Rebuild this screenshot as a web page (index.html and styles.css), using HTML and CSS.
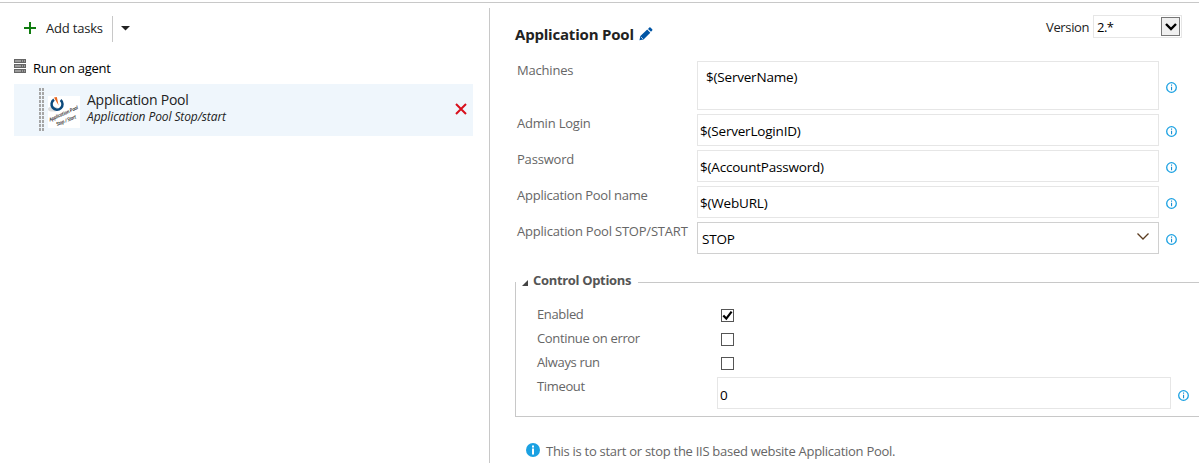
FILE: index.html
```html
<!DOCTYPE html>
<html lang="en">
<head>
<meta charset="utf-8">
<title>Application Pool</title>
<link rel="stylesheet" href="styles.css">
</head>
<body>
<svg width="0" height="0" class="defs">
  <symbol id="info" viewBox="0 0 11 11">
    <circle cx="5.5" cy="5.5" r="4.8" fill="none" stroke="#1ba1e2" stroke-width="1.3"/>
    <path d="M5 2.6h1.1v1.1H5zM5 4.7h1.1v3.6H5z" fill="#1b8fd0"/>
  </symbol>
</svg>
<main class="page">
  <section class="tasks">
    <div class="toolbar">
      <svg class="plus" width="12" height="12" viewBox="0 0 12 12"><path d="M6 0v12M0 6h12" stroke="#107c10" stroke-width="2"/></svg>
      <span class="add">Add tasks</span>
      <span class="sep"></span>
      <svg width="9" height="5" viewBox="0 0 9 5"><path d="M0 0h9L4.5 4.5z" fill="#222"/></svg>
    </div>
    <div class="agent">
      <svg width="12" height="14" viewBox="0 0 12 14"><path d="M0 0h12v4H0zM0 5h12v4H0zM0 10h12v4H0z" fill="#666"/><path d="M1 2h6M8 2h1M10 2h1M1 7h6M8 7h1M10 7h1M1 12h6M8 12h1M10 12h1" stroke="#ddd" stroke-width=".9"/></svg>
      <span class="agent-name">Run on agent</span>
    </div>
    <div class="task">
      <span class="grip"></span>
      <svg class="logo" width="32" height="32" viewBox="0 0 32 32">
        <path d="M0 0h32v32H0z" fill="#fff"/>
        <ellipse cx="5" cy="13" rx="5" ry="2.6" fill="#ddd"/>
        <path d="M6 3.6A5.5 5.5 0 1 0 12.6 4" fill="none" stroke="#0d4a7c" stroke-width="2.5"/>
        <path d="M6 1.500l2.800-.5 1.800 8.500z" fill="#e8641b"/>
        <g fill="#111" font-family="Open Sans, sans-serif" font-style="italic" font-weight="600">
          <text x="2" y="25.500" font-size="5" textLength="31" lengthAdjust="spacingAndGlyphs" transform="rotate(-24 2 25.500)">Application Pool</text>
          <text x="9" y="30" font-size="5" textLength="21" lengthAdjust="spacingAndGlyphs" transform="rotate(-22 9 30)">Stop / Start</text>
        </g>
      </svg>
      <div class="task-text">
        <div class="task-title"><span>Application Pool</span></div>
        <div class="task-sub"><span>Application Pool Stop/start</span></div>
      </div>
      <svg class="remove" width="12" height="12" viewBox="0 0 12 12"><path d="M1 1l10 10M11 1L1 11" stroke="#d8101c" stroke-width="2"/></svg>
    </div>
  </section>
  <section class="details">
    <header class="head">
      <h1>Application Pool</h1>
      <svg class="pencil" width="14" height="14" viewBox="0 0 14 14"><path d="M.4 13.300l1-4.200 6.800-6.500 3.100 3.100-6.800 6.700zM9 1.900l1.300-1.300q.6-.5 1.200 0l1.700 1.700q.6.600 0 1.200L12 4.800z" fill="#0055a5"/><path d="M2 10l2 2" stroke="#fff" stroke-width=".7"/></svg>
      <span class="version-label">Version</span>
      <div class="version"><span>2.*</span>
        <span class="drop"><svg width="12" height="8" viewBox="0 0 12 8"><path d="M1 1l5 5 5-5" fill="none" stroke="#000" stroke-width="2.400"/></svg></span>
      </div>
    </header>
    <div class="form">
      <span class="label">Machines</span><div class="field area"><span>$(ServerName)</span></div><svg class="info"><use href="#info"/></svg>
      <span class="label">Admin Login</span><div class="field"><span>$(ServerLoginID)</span></div><svg class="info"><use href="#info"/></svg>
      <span class="label">Password</span><div class="field"><span>$(AccountPassword)</span></div><svg class="info"><use href="#info"/></svg>
      <span class="label label-name">Application Pool name</span><div class="field"><span>$(WebURL)</span></div><svg class="info"><use href="#info"/></svg>
      <span class="label">Application Pool STOP/START</span><div class="field select"><span>STOP</span><svg width="12" height="7" viewBox="0 0 12 7"><path d="M.5.500L6 6 11.500.500" fill="none" stroke="#5b3c20" stroke-width="1.300"/></svg></div><svg class="info"><use href="#info"/></svg>
    </div>
    <fieldset class="options">
      <legend><svg width="6" height="6" viewBox="0 0 6 6"><path d="M6 0v6H0z" fill="#444"/></svg><span>Control Options</span></legend>
      <div class="option"><span>Enabled</span><span class="check"><svg width="11" height="11" viewBox="0 0 11 11"><path d="M1.300 5.500L4.300 8.600 9.600 1.600" fill="none" stroke="#000" stroke-width="2.200"/></svg></span></div>
      <div class="option"><span>Continue on error</span><span class="check"></span></div>
      <div class="option"><span>Always run</span><span class="check"></span></div>
      <div class="option timeout"><span>Timeout</span><div class="field"><span>0</span></div><svg class="info"><use href="#info"/></svg></div>
    </fieldset>
    <div class="note">
      <svg width="14" height="14" viewBox="0 0 14 14"><circle cx="7" cy="7" r="7" fill="#1ba1e2"/><path d="M6 2.500h2v2H6zM6 5.500h2v6H6z" fill="#fff"/></svg>
      <span class="note-text">This is to start or stop the IIS based website Application Pool.</span>
    </div>
  </section>
</main>
</body>
</html>
```
FILE: styles.css
```css
* { box-sizing: border-box; }
body {
  margin: 0;
  background: #fff;
  color: #222;
  font: 13px/18px "Open Sans", "Noto Sans", sans-serif;
  letter-spacing: -0.2px;
  overflow: hidden;
}
svg { display: block; flex: none; }
.defs { display: none; }
span { white-space: nowrap; }
.page {
  width: 1199px;
  height: 461px;
  margin-top: 2px;
  border-top: 1px solid #c8c8c8;
  display: flex;
}
.tasks { width: 489px; padding: 13px 16px 0 14px; }
.toolbar { display: flex; align-items: center; height: 26px; padding-left: 10px; }
.add { margin: -3px 0 0 10px; width: 66px; }
.sep { width: 1px; height: 26px; background: #c8c8c8; margin-right: 8px; }
.toolbar svg:last-child { margin-top: -2px; }
.plus { margin-top: -2px; }
.agent { display: flex; height: 42px; padding-top: 17px; gap: 7px; }
.agent-name { color: #000; letter-spacing: -0.25px; }
.task {
  height: 52px;
  background: #eff6fc;
  display: flex;
  align-items: flex-start;
  padding: 4px 6px 0 25px;
}
.grip {
  width: 5px;
  height: 44px;
  background:
    repeating-linear-gradient(to bottom, transparent 0 3px, #eff6fc 3px 4px),
    repeating-linear-gradient(to right, #a6a6a6 0 2px, transparent 2px 3px);
}
.logo { margin: 8px 0 0 4px; overflow: visible; }
.task-text { padding: 4px 0 0 7px; flex: 1; }
.task-title { font-size: 14px; line-height: 16px; letter-spacing: -0.25px; }
.task-sub { font-size: 12px; line-height: 17px; font-style: italic; letter-spacing: -0.1px; }
.remove { margin-top: 15px; }
.details { flex: 1; margin-top: 5px; border-left: 1px solid #c8c8c8; padding-left: 25px; min-width: 0; }
.head { display: flex; height: 53px; padding-top: 7px; }
h1 { margin: 9px 0 0; font-size: 15px; line-height: 20px; width: 124px; white-space: nowrap; }
.pencil { margin-top: 12px; }
.version-label { margin: 3px 4px 0 auto; width: 43px; letter-spacing: -0.35px; }
.version {
  width: 89px;
  height: 23px;
  margin-right: 17px;
  padding: 1px 1px 1px 3px;
  border: 1px solid #e6e6e6;
  display: flex;
  justify-content: space-between;
  color: #000;
}
.version > span:first-child { margin-top: 1px; letter-spacing: -0.5px; }
.drop {
  width: 19px;
  height: 19px;
  border: 1px solid #777;
  background: #f0f0f0;
  display: flex;
  align-items: center;
  justify-content: center;
}
.form {
  display: grid;
  grid-template-columns: 180px 462px 11px;
  grid-template-rows: 49px repeat(4, 32px);
  row-gap: 4px;
  padding-left: 2px;
}
.label, .option, .note { color: #666; }
.label-name { letter-spacing: -0.25px; }
.field {
  height: 32px;
  border: 1px solid #e6e6e6;
  padding: 7px 2px 0;
  color: #000;
  font-size: 13.5px;
}
.area { height: 49px; padding: 6px 8px; }
.select { border-color: #d0d0d0; display: flex; justify-content: space-between; padding: 7px 9px 0 4px; }
.select svg { margin-top: 3px; }
.info { width: 11px; height: 11px; align-self: center; margin: 3px 0 0 7px; }
.options {
  margin: 18px 0 0;
  height: 145px;
  padding: 0 0 0 21px;
  border: 1px solid #c8c8c8;
  border-right: 0;
  min-width: 0;
}
legend {
  display: flex;
  align-items: center;
  gap: 5px;
  width: 122px;
  height: 20px;
  margin-left: -21px;
  padding: 0 0 0 6px;
  font-weight: 700;
  letter-spacing: -0.33px;
  color: #555;
}
legend svg { margin-top: 2px; }
legend span { margin-top: -4px; }
.option { display: flex; flex: none; height: 24px; letter-spacing: -0.35px; }
.option:nth-of-type(1) { margin-top: 13px; }
.option > span:first-child { width: 184px; }
.check { width: 13px; height: 13px; border: 1px solid #555; margin-top: 4px; }
.timeout { height: 32px; }
.timeout > span:first-child { width: 180px; }
.timeout .field { width: 454px; padding-top: 8px; }
.timeout .info { margin-top: 5px; }
.note { display: flex; padding: 26px 0 0 11px; gap: 6px; }
.note-text { margin-top: -1px; letter-spacing: -0.28px; }
```
